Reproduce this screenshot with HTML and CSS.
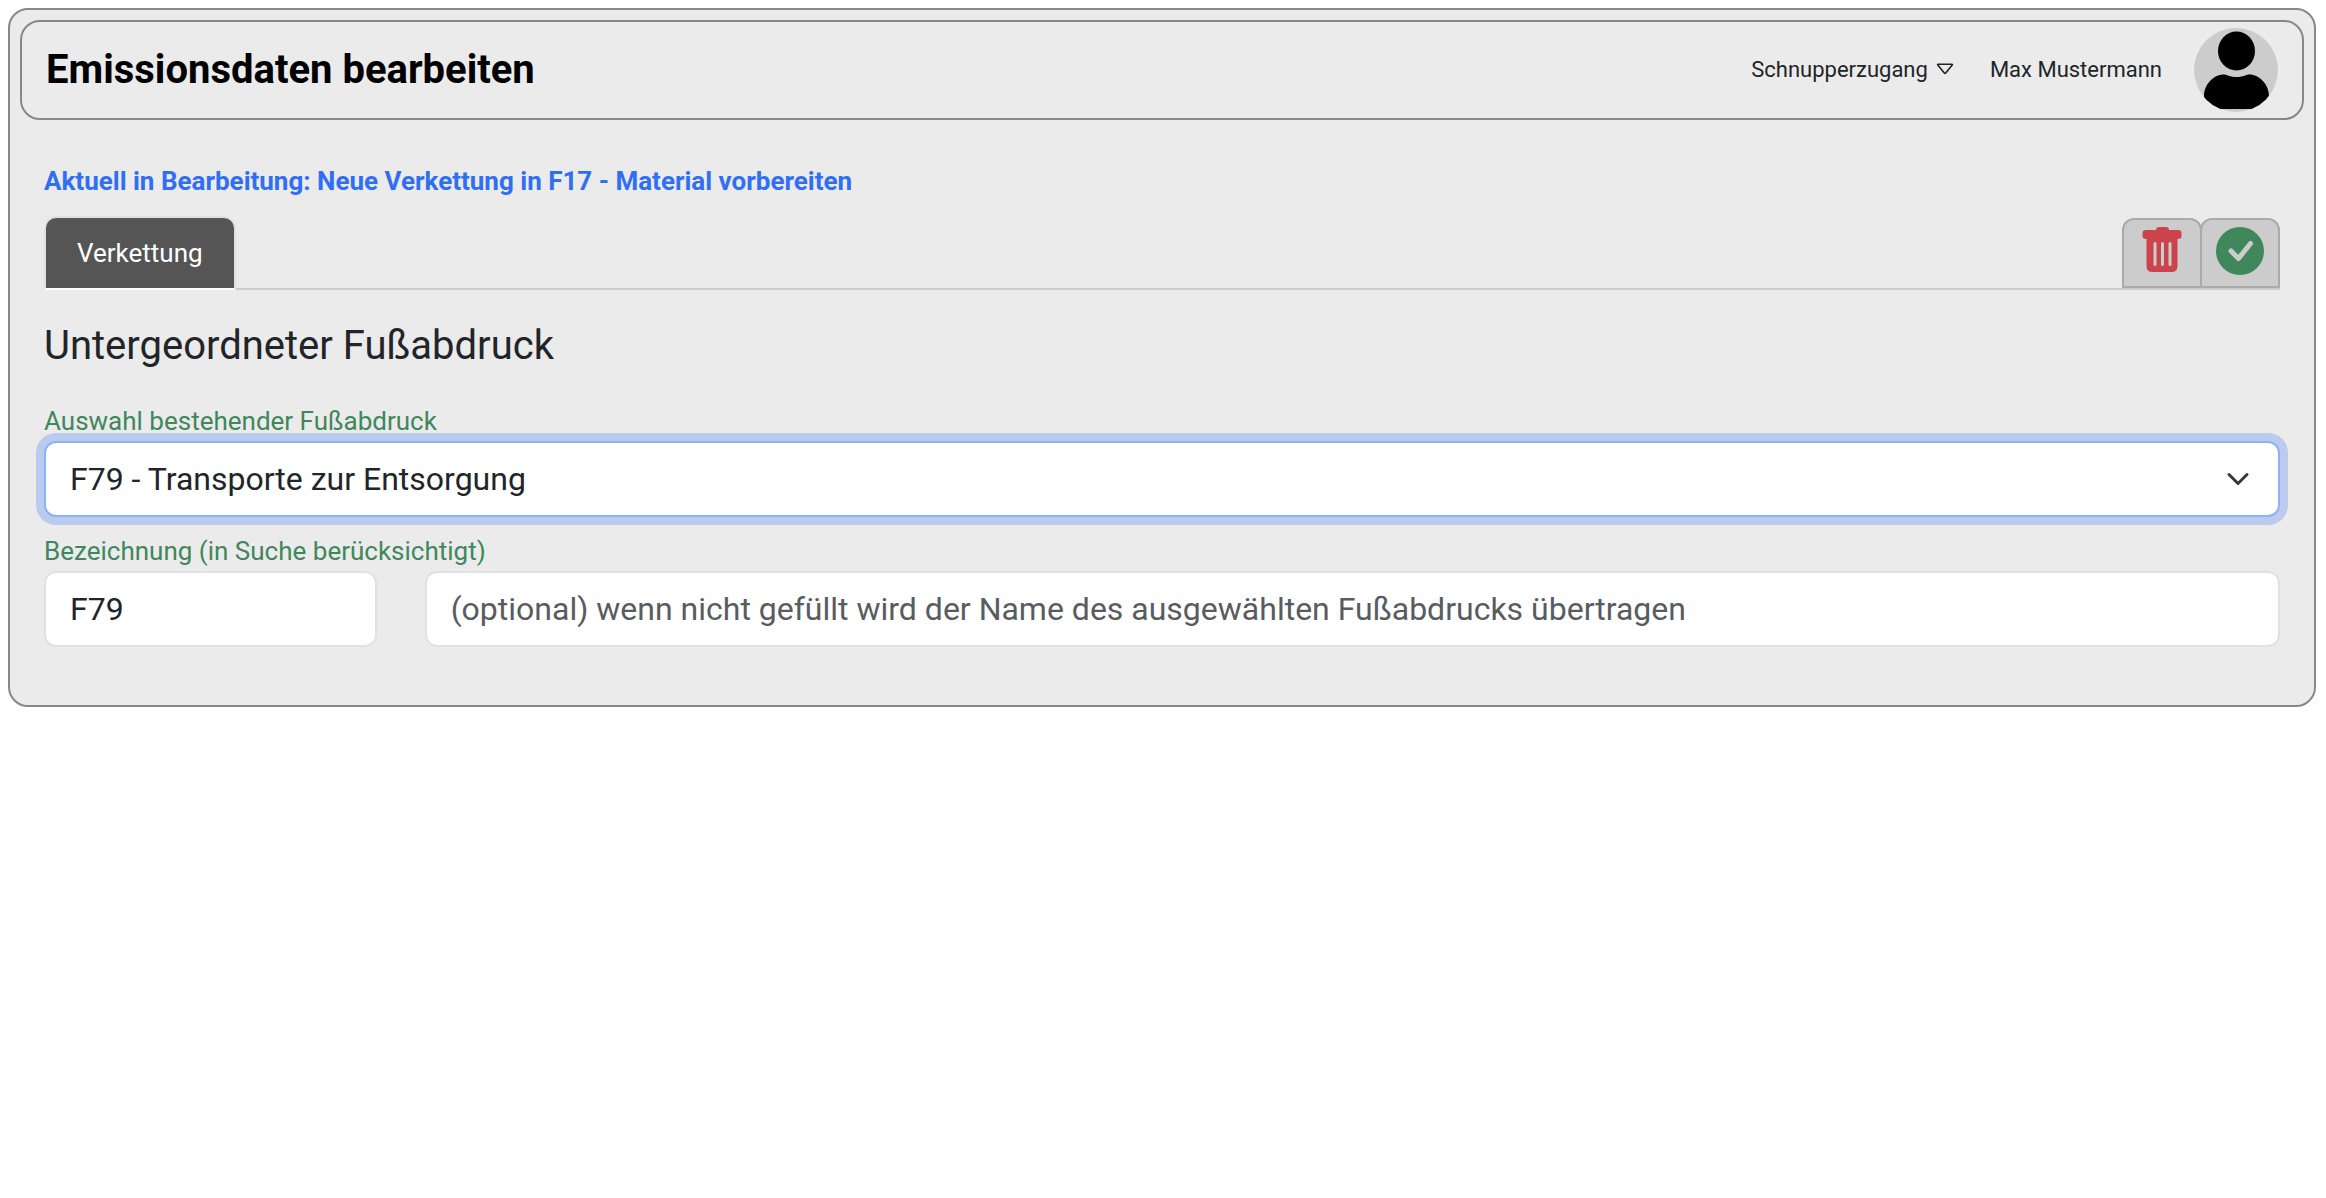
FILE: index.html
```html
<!DOCTYPE html>
<html lang="de">
<head>
    <meta charset="UTF-8">
    <meta name="viewport" content="width=device-width, initial-scale=1.0">
    <title>Emissionsdaten bearbeiten</title>
    <link rel="stylesheet" href="styles.css">
</head>
<body>
    <div class="page-card">
        <header class="page-header">
            <h1>Emissionsdaten bearbeiten</h1>
            <div class="user-area">
                <button type="button" class="account-switch">
                    Schnupperzugang
                    <svg width="18" height="16" viewBox="0 0 18 16" aria-hidden="true">
                        <path d="M2.2 2.2h13.6q1 0 .4.9L9.7 11q-.7.8-1.4 0L1.8 3.1q-.6-.9.4-.9z" fill="none" stroke="currentColor" stroke-width="1.6"/>
                    </svg>
                </button>
                <span class="user-name">Max Mustermann</span>
                <svg class="avatar" viewBox="0 0 84 84" role="img" aria-label="Profilbild">
                    <defs>
                        <clipPath id="avatar-clip"><circle cx="42" cy="42" r="42"/></clipPath>
                    </defs>
                    <g clip-path="url(#avatar-clip)">
                        <rect width="84" height="84" fill="#ccc"/>
                        <ellipse cx="42.5" cy="23" rx="18.5" ry="19.5"/>
                        <path d="M10 81V68C10 57 19 46.5 30 46.5c3 0 5 2.5 12.5 2.5s9.500-2.500 12.500-2.500c11 0 20 10.500 20 21.500v13z"/>
                    </g>
                </svg>
            </div>
        </header>

        <main class="content">
            <p class="edit-status">Aktuell in Bearbeitung: Neue Verkettung in F17 - Material vorbereiten</p>

            <div class="tab-bar">
                <button type="button" class="tab active">Verkettung</button>
                <div class="tab-actions">
                    <button type="button" class="action" aria-label="Löschen">
                        <svg width="40" height="48" viewBox="0 1 40 48" aria-hidden="true">
                            <path fill="#cc444b" d="M17 1h7q3 0 3 3h9q3.5 0 3.5 3v3q0 3-3.5 3h-.5v27q0 6-6 6h-19q-6 0-6-6V13H4Q.5 13 .5 10V7Q.5 4 4 4h10q0-3 3-3z"/>
                            <path d="M13 17.5v21M20.5 17.5v21M28 17.5v21" stroke="#ccc" stroke-width="3" stroke-linecap="round"/>
                        </svg>
                    </button>
                    <button type="button" class="action" aria-label="Speichern">
                        <svg width="48" height="48" viewBox="0 0 48 48" aria-hidden="true">
                            <circle cx="24" cy="24" r="24" fill="#40875b"/>
                            <path d="M15 24l7.5 7.5L34.5 16.5" fill="none" stroke="#ccc" stroke-width="5" stroke-linecap="round" stroke-linejoin="round"/>
                        </svg>
                    </button>
                </div>
            </div>

            <h2>Untergeordneter Fußabdruck</h2>

            <form class="chain-form">
                <div class="field">
                    <label for="footprint">Auswahl bestehender Fußabdruck</label>
                    <div class="select-wrap">
                        <select id="footprint" class="control selected">
                            <option>F79 - Transporte zur Entsorgung</option>
                        </select>
                        <svg class="chevron" viewBox="0 0 16 16" aria-hidden="true">
                            <path d="m2 5 6 6 6-6" fill="none" stroke="#343a40" stroke-width="2" stroke-linecap="round" stroke-linejoin="round"/>
                        </svg>
                    </div>
                </div>

                <div class="field">
                    <label for="short-name">Bezeichnung (in Suche berücksichtigt)</label>
                    <div class="name-row">
                        <input id="short-name" class="control" type="text" value="F79">
                        <input class="control long-name" type="text" aria-label="Name" placeholder="(optional) wenn nicht gefüllt wird der Name des ausgewählten Fußabdrucks übertragen">
                    </div>
                </div>
            </form>
        </main>
    </div>
</body>
</html>
```
FILE: styles.css
```css
* {
    box-sizing: border-box;
}

body {
    margin: 0;
    padding: 8px 10px 8px 8px;
    font-family: Roboto, "Liberation Sans", sans-serif;
    font-size: 26px;
    line-height: 39px;
    color: #212529;
    background: #fff;
}

button,
input,
select {
    font: inherit;
    color: inherit;
}

/* Card and header */
.page-card {
    padding: 10px;
    background: #ebebeb;
    border: 2px solid #888;
    border-radius: 20px;
}

.page-header {
    display: flex;
    align-items: center;
    justify-content: space-between;
    padding: 6px 24px;
    border: 2px solid #888;
    border-radius: 20px;
}

h1 {
    margin: 0;
    font-size: 40px;
    line-height: 48px;
    font-weight: 700;
    color: #000;
}

.user-area {
    display: flex;
    align-items: center;
    font-size: 22px;
    line-height: 32px;
}

.account-switch {
    display: flex;
    align-items: center;
    gap: 8px;
    padding: 0;
    border: 0;
    background: none;
}

.user-name {
    margin: 0 32px 0 36px;
}

.avatar {
    width: 84px;
    height: 84px;
}

.content {
    padding: 42px 24px 48px;
}

.edit-status {
    margin: 0 0 15px;
    font-weight: 700;
    color: #306ef6;
}

/* Tabs */
.tab-bar {
    display: flex;
    align-items: flex-end;
    justify-content: space-between;
    border-bottom: 2px solid #ccc;
}

.tab {
    height: 74px;
    margin-bottom: -2px;
    padding: 0 31px;
    border: 2px solid #dee2e6;
    border-bottom-color: #fff;
    border-radius: 12px 12px 0 0;
}

.tab.active {
    color: #fff;
    background: #555;
}

.tab-actions {
    display: flex;
}

.action {
    display: flex;
    justify-content: center;
    width: 80px;
    height: 70px;
    padding: 7px 0 0;
    background: #ccc;
    border: 2px solid #aaa;
    border-radius: 12px 12px 0 0;
}

.action + .action {
    margin-left: -2px;
}

/* Form */
h2 {
    margin: 32px 0;
    font-size: 40px;
    line-height: 48px;
    font-weight: 400;
}

.chain-form {
    display: grid;
    gap: 15px;
}

label {
    display: block;
    color: #40875b;
}

.control {
    display: block;
    width: 100%;
    height: 76px;
    padding: 0 24px;
    font-size: 32px;
    line-height: 48px;
    background: #fff;
    border: 2px solid #dee2e6;
    border-radius: 12px;
    outline: 0;
    appearance: none;
}

.control::placeholder {
    color: #595c5f;
    opacity: 1;
}

.control:focus,
.control.selected {
    border-color: #8ab1f9;
    box-shadow: 0 0 0 8px #bccaee;
}

.select-wrap {
    position: relative;
}

.chevron {
    position: absolute;
    top: 26px;
    right: 30px;
    width: 24px;
    height: 24px;
    pointer-events: none;
}

.name-row {
    display: grid;
    grid-template-columns: repeat(12, 1fr);
    gap: 48px;
}

.name-row .control {
    grid-column: span 2;
}

.name-row .long-name {
    grid-column: span 10;
}
```
